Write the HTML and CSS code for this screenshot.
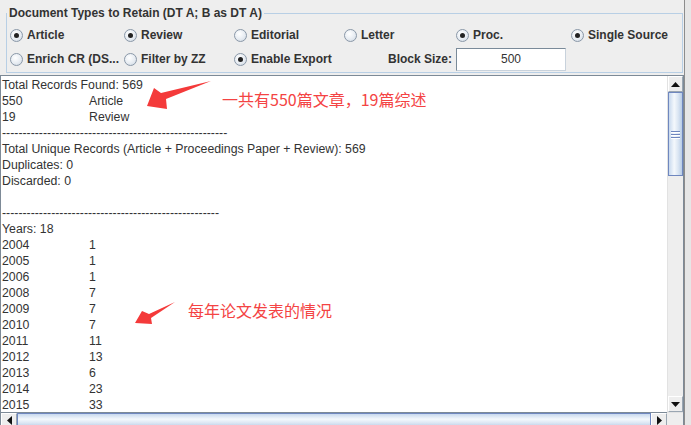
FILE: index.html
```html
<!DOCTYPE html>
<html lang="en">
<head>
    <meta charset="UTF-8">
    <title>Document Types</title>
    <link rel="stylesheet" href="styles.css">
</head>
<body>

    <div class="window">
        <fieldset class="doc-types">
            <legend>Document Types to Retain (DT A; B as DT A)</legend>
            <div class="options">
                <span class="radio on"><i></i>Article</span>
                <span class="radio on"><i></i>Review</span>
                <span class="radio"><i></i>Editorial</span>
                <span class="radio"><i></i>Letter</span>
                <span class="radio on"><i></i>Proc.</span>
                <span class="radio on"><i></i>Single Source</span>

                <span class="radio"><i></i>Enrich CR (DS...</span>
                <span class="radio"><i></i>Filter by ZZ</span>
                <span class="radio on"><i></i>Enable Export</span>
                <span class="block-label">Block Size:</span>
                <input class="block-size" type="text" value="500">
            </div>
        </fieldset>

        <div class="output">
            <div class="text">
                <div>Total Records Found: 569</div>
                <div><span class="col">550</span>Article</div>
                <div><span class="col">19</span>Review</div>
                <div>-------------------------------------------------------</div>
                <div>Total Unique Records (Article + Proceedings Paper + Review): 569</div>
                <div>Duplicates: 0</div>
                <div>Discarded: 0</div>
                <div>&nbsp;</div>
                <div>-----------------------------------------------------</div>
                <div>Years: 18</div>
                <div><span class="col">2004</span>1</div>
                <div><span class="col">2005</span>1</div>
                <div><span class="col">2006</span>1</div>
                <div><span class="col">2008</span>7</div>
                <div><span class="col">2009</span>7</div>
                <div><span class="col">2010</span>7</div>
                <div><span class="col">2011</span>11</div>
                <div><span class="col">2012</span>13</div>
                <div><span class="col">2013</span>6</div>
                <div><span class="col">2014</span>23</div>
                <div><span class="col">2015</span>33</div>
            </div>

            <div class="vbar">
                <div class="btn"><svg width="9" height="5" viewBox="0 0 9 5"><polygon points="0,5 9,5 4.5,0" fill="#111"/></svg></div>
                <div class="thumb v"><b></b><b></b><b></b></div>
                <div class="track"></div>
                <div class="btn"><svg width="9" height="5" viewBox="0 0 9 5"><polygon points="0,0 9,0 4.5,5" fill="#111"/></svg></div>
            </div>

            <div class="hbar">
                <div class="btn"><svg width="5" height="9" viewBox="0 0 5 9"><polygon points="5,0 5,9 0,4.5" fill="#111"/></svg></div>
                <div class="thumb h"></div>
                <div class="btn"><svg width="5" height="9" viewBox="0 0 5 9"><polygon points="0,0 0,9 5,4.5" fill="#111"/></svg></div>
            </div>
            <div class="corner"></div>
        </div>

        <!-- annotations drawn on top of the screenshot -->
        <svg class="marks" width="691" height="425" viewBox="0 0 691 425">
            <polygon points="147,106 154,88 161,93 211,81 166,99 167,109" fill="#f43a3a"/>
            <polygon points="135,323 142,311 149,314 175,302 151,318 152,324" fill="#f43a3a"/>
        </svg>
        <div class="note note-1">一共有550篇文章，19篇综述</div>
        <div class="note note-2">每年论文发表的情况</div>
    </div>

</body>
</html>
```

FILE: styles.css
```css
body {
    margin: 0;
    background-color: #e6e6e6;
    font-family: "Liberation Sans", Arial, sans-serif;
    font-size: 12px;
    color: #333;
    overflow: hidden;
}
.window {
    position: relative;
    width: 684px;
    height: 425px;
    background-color: #eeeeee;
    border-right: 1px solid #8c8c8c;
    overflow: hidden;
}
.doc-types {
    margin: 6px 1px 0 6px;
    padding: 0 0 1px 0;
    border: 1px solid #b8cfe5;
    min-width: 0;
}
.doc-types legend {
    padding: 0 2px;
    margin-left: 0;
    font-weight: bold;
    line-height: 14px;
    color: #333;
}
.options {
    display: grid;
    grid-template-columns: 114px 110px 110px 112px 115px auto;
    grid-auto-rows: 24px;
    margin-left: 3px;
    margin-top: 3px;
    align-items: center;
}
.radio {
    display: flex;
    align-items: center;
    font-weight: bold;
    white-space: nowrap;
}
.radio i {
    box-sizing: border-box;
    width: 13px;
    height: 13px;
    margin-right: 4px;
    border: 1px solid #8a98a8;
    border-radius: 50%;
    background: radial-gradient(circle at 40% 35%, #ffffff 0%, #e7ecf2 55%, #c9d3de 100%);
    display: flex;
    align-items: center;
    justify-content: center;
}
.radio.on i::after {
    content: "";
    width: 5px;
    height: 5px;
    border-radius: 50%;
    background-color: #222;
}
.block-label {
    font-weight: bold;
    text-align: right;
    padding-right: 4px;
}
.block-size {
    box-sizing: border-box;
    width: 110px;
    height: 23px;
    margin: 0;
    padding: 0;
    border: 1px solid #7a8a99;
    border-bottom-color: #c8d2dc;
    border-right-color: #c8d2dc;
    background-color: #fff;
    font-family: "Liberation Sans", Arial, sans-serif;
    font-size: 12px;
    color: #333;
    text-align: center;
}
.output {
    display: grid;
    grid-template-columns: 1fr 16px;
    grid-template-rows: 336px 16px;
    margin-top: 2px;
    height: 349px;
    border: 1px solid #7d8a97;
    border-bottom: none;
    overflow: hidden;
}
.text {
    background-color: #fff;
    padding: 1px 0 0 1px;
    font-size: 12.3px;
    line-height: 16px;
    overflow: hidden;
    white-space: nowrap;
}
.col {
    display: inline-block;
    width: 87px;
}
.vbar {
    display: flex;
    flex-direction: column;
    background-color: #eeeeee;
    border-left: 1px solid #e2e2e2;
}
.hbar {
    display: flex;
    background-color: #eeeeee;
    border-top: 1px solid #7d8a97;
}
.corner {
    background-color: #eeeeee;
    border-top: 1px solid #e2e2e2;
}
.btn {
    box-sizing: border-box;
    width: 16px;
    height: 16px;
    flex: none;
    display: flex;
    align-items: center;
    justify-content: center;
    background-color: #eeeeee;
    border: 1px solid #fff;
    border-right-color: #9aa6b2;
    border-bottom-color: #9aa6b2;
}
.vbar .btn {
    width: 15px;
}
.hbar .btn {
    height: 15px;
}
.track {
    flex: 1;
}
.thumb {
    box-sizing: border-box;
    border: 1px solid #6f87bf;
    display: flex;
    align-items: center;
    justify-content: center;
}
.thumb.v {
    height: 84px;
    width: 15px;
    flex-direction: column;
    gap: 2px;
    background: linear-gradient(to right, #c8d9ee, #f4f8fc 40%, #dbe6f3 70%, #b8cce6);
}
.thumb.v b {
    display: block;
    width: 9px;
    height: 1px;
    background-color: #6f87bf;
    box-shadow: 0 1px 0 #fff;
}
.thumb.h {
    width: 634px;
    height: 15px;
    background: linear-gradient(to bottom, #c8d9ee, #f4f8fc 40%, #dbe6f3 70%, #b8cce6);
}
.marks {
    position: absolute;
    left: 0;
    top: 0;
}
.note {
    position: absolute;
    font-family: "Noto Sans CJK SC", sans-serif;
    font-size: 16px;
    line-height: 20px;
    color: #f44343;
    white-space: nowrap;
}
.note-1 {
    left: 222px;
    top: 89px;
}
.note-2 {
    left: 188px;
    top: 300px;
}
```
